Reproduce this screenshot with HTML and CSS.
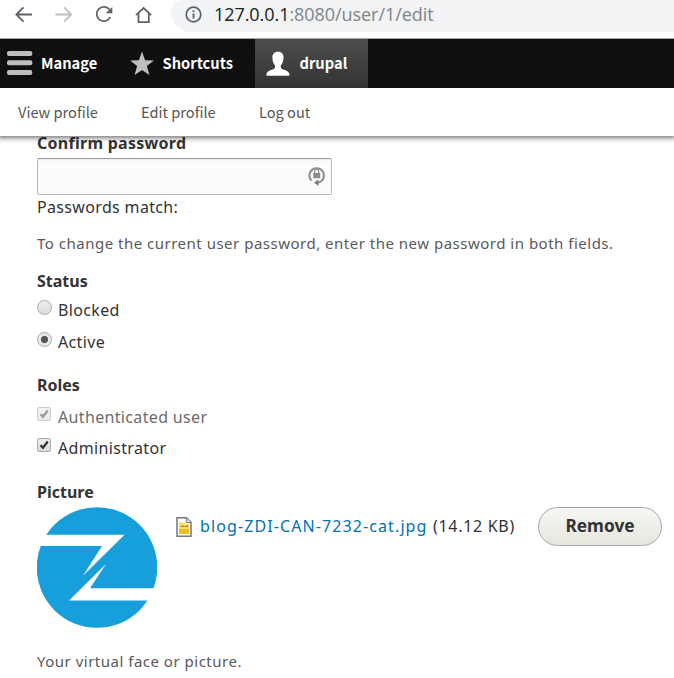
FILE: index.html
```html
<!DOCTYPE html>
<html lang="en">
<head>
<meta charset="utf-8">
<title>drupal</title>
<link rel="stylesheet" href="styles.css">
</head>
<body>
<header>
  <nav class="browser">
    <svg class="nav-icons" width="160" height="32" viewBox="0 0 160 32" fill="none" stroke="#5f6368" stroke-width="1.8">
      <path d="M32 14.5H17M23.5 7.3L16.3 14.5l7.2 7.2"/>
      <path stroke="#bdbfc1" d="M55.5 14.5H71M64 7.3l7.2 7.2-7.2 7.2"/>
      <path d="M109.500 9.500A7.200 7.200 0 1 0 110.300 17.200"/>
      <path d="M112.300 7v6.300h-6.800z" fill="#5f6368" stroke="none"/>
      <path d="M136 15.200L143.600 8l7.600 7.200M138.500 13.500v8.600h10.300v-8.600" />
    </svg>
    <div class="address">
      <svg width="17" height="17" viewBox="0 0 17 17" fill="none" stroke="#5f6368" stroke-width="1.7"><circle cx="8.500" cy="8.500" r="7.300"/><path stroke-width="1.900" d="M8.500 7.500v5M8.500 4.200v1.900"/></svg>
      <span class="url">127.0.0.1<span>:8080/user/1/edit</span></span>
    </div>
  </nav>
  <nav class="toolbar">
    <a class="tab manage"><svg width="26" height="26" viewBox="0 0 26 26" fill="#bebebe"><rect x="0" y="1" width="25.300" height="5" rx="2"/><rect x="0" y="10.300" width="25.300" height="5" rx="2"/><rect x="0" y="20" width="25.300" height="5" rx="2"/></svg><span>Manage</span></a>
    <a class="tab shortcuts"><svg width="24" height="25" viewBox="0 0 24 25" fill="#bebebe"><path d="M12 .5l3.100 8.700 8.800.2-7 5.500 2.500 9.200L12 18.900l-7.400 5.200 2.500-9.200-7-5.500 8.800-.2z"/></svg><span>Shortcuts</span></a>
    <a class="tab user"><svg width="24" height="25" viewBox="0 0 24 25" fill="#fff"><path d="M12 .8c3.800 0 5.700 2.400 5.500 6.400-.1 3-1.100 5.100-2.300 6.700-.8 1.200-.6 3.100.6 3.800 2.400 1.400 6.400 1.800 7.500 4.700.3.900.2 2.300-.5 2.300H1c-.7 0-.7-1.500-.4-2.300 1.100-2.900 5.100-3.300 7.500-4.700 1.200-.7 1.400-2.600.6-3.800-1.200-1.600-2.200-3.700-2.300-6.700C6.200 3.200 8.200.8 12 .8z"/></svg><span>drupal</span></a>
  </nav>
  <nav class="tray"><a class="view">View profile</a><a class="edit">Edit profile</a><a class="logout">Log out</a></nav>
</header>
<main>
  <h4 class="confirm"><span>Confirm password</span></h4>
  <div class="field">
    <svg width="18" height="22" viewBox="0 0 18 22" fill="none" stroke="#8b8b8b" stroke-width="2"><path d="M3.500 15.600A7.300 7.300 0 1 1 13.800 15.600Q11.500 18.100 8 18.100"/><path d="M6 17.800l4.500-3.300v6.600z" fill="#777" stroke="none"/><rect x="5.200" y="8" width="7" height="5.200" fill="#8b8b8b" stroke="none"/><path stroke-width="1.200" d="M6.700 8V6.500a2 2 0 0 1 4 0V8"/></svg>
  </div>
  <p class="match"><span>Passwords match:</span></p>
  <p class="help"><span>To change the current user password, enter the new password in both fields.</span></p>
  <h4 class="status"><span>Status</span></h4>
  <label class="option blocked"><i class="radio"></i><span>Blocked</span></label>
  <label class="option active"><i class="radio on"></i><span>Active</span></label>
  <h4 class="roles"><span>Roles</span></h4>
  <label class="option auth"><i class="check"><svg width="12" height="12" viewBox="0 0 12 12"><path d="M2.500 6.200l2.400 2.500L9.800 2.500" fill="none" stroke="#444" stroke-width="2.300"/></svg></i><span>Authenticated user</span></label>
  <label class="option admin"><i class="check"><svg width="12" height="12" viewBox="0 0 12 12"><path d="M2.500 6.200l2.400 2.500L9.800 2.500" fill="none" stroke="#333" stroke-width="2.300"/></svg></i><span>Administrator</span></label>
  <h4 class="picture"><span>Picture</span></h4>
  <div class="upload">
    <svg class="avatar" width="120" height="121" viewBox="0 0 120 121"><circle cx="60" cy="60.500" r="60.300" fill="#179fdc"/><path fill="#fff" d="M0 27.700H87.500L46 68.700 65 39H0zM120 93.500H32L69 57 53 81.300H120z"/></svg>
    <svg class="file-icon" width="16" height="20" viewBox="0 0 16 20"><path d="M1 .8h9.500L15 5.300v13.900H1z" fill="#fff" stroke="#777" stroke-width="1.500"/><path d="M10.300.8v4.700H15" fill="#ddd" stroke="#777"/><path d="M3 5.500h6v1.500h4v10H3z" fill="#fbdc65"/><path d="M3 12h10v5H3z" fill="#f0bd20"/><path d="M4 9.500l3-1 2 .8 3-1v1.500H4z" fill="#8c6b13"/></svg>
    <span class="filename">blog-ZDI-CAN-7232-cat.jpg</span>
    <span class="size">(14.12 KB)</span>
    <button><span>Remove</span></button>
  </div>
  <p class="note"><span>Your virtual face or picture.</span></p>
</main>
</body>
</html>
```

FILE: styles.css
```css
* { box-sizing: border-box; }
body { margin: 0; height: 678px; overflow: hidden; background: #fff; color: #333; font: 16px/24px "Noto Sans", sans-serif; }
header { position: relative; z-index: 1; box-shadow: 0 0 5px 2px rgba(0,0,0,.55); font-family: "Noto Sans CJK SC", sans-serif; }
svg { display: block; flex: none; }
.browser { display: flex; height: 39px; background: #fff; border-bottom: 1px solid #a5a7a8; }
.nav-icons { margin-right: 11px; }
.address { display: flex; flex: 1; align-items: center; height: 32px; padding: 0 0 3px 14px; background: #f1f3f4; border-radius: 12px 0 0 20px; }
.url { margin: -1px 0 0 12px; font: 18px/28px "Open Sans", sans-serif; letter-spacing: -.06px; color: #222; white-space: nowrap; }
.url span { color: #80868b; }
.toolbar { display: flex; height: 49px; background: #0f0f0f; color: #fff; font-size: 14.700px; font-weight: 700; }
.tab { display: flex; align-items: center; white-space: nowrap; padding-bottom: 1px; }
.manage { width: 123px; padding-left: 7px; gap: 8px; }
.shortcuts { width: 132px; padding-left: 6.500px; gap: 9px; }
.user { width: 113px; padding-left: 10.500px; gap: 10px; background: linear-gradient(#4d4d4d, #333); }
.tray { display: flex; height: 48px; align-items: center; background: #fff; color: #565656; font-size: 14.600px; padding: 0 0 0 18px; }
.view { width: 123px; }
.edit { width: 118px; }
main { padding: 0 12px 0 37px; margin-top: -5px; letter-spacing: .34px; }
h4, p { margin: 0; white-space: nowrap; }
h4 { font-size: 16px; font-weight: 700; line-height: 24px; letter-spacing: 0; }
.confirm { letter-spacing: .27px; }
.field { display: flex; justify-content: flex-end; width: 295px; height: 37px; margin-top: 3px; padding: 6px 5px 0 0; border: 1px solid #b8b8b8; border-top-color: #999; border-radius: 2px; background: #fcfcfa; box-shadow: inset 0 1px 2px rgba(0,0,0,.08); }
.match { height: 36px; }
.help, .note { color: #595959; font-size: 15px; letter-spacing: .5px; }
.help { height: 38px; }
.status { height: 29px; }
.option { display: flex; gap: 6px; white-space: nowrap; }
.blocked { height: 32px; }
.active { height: 43px; }
.roles { height: 32px; }
.auth { height: 31px; color: #6b6b6b; }
.admin { height: 44px; }
.radio, .check { flex: none; width: 15px; height: 15px; margin-top: 2px; border: 1px solid #a9a9a9; background: linear-gradient(#efefef, #dcdcdc); }
.radio { border-radius: 50%; }
.on { background: radial-gradient(circle at center, #555 0 3.200px, #e8e8e8 4px); }
.check { width: 14px; height: 14px; margin-right: 1px; border-radius: 2px; }
.auth .check { opacity: .55; }
.picture { height: 27px; }
.upload { display: flex; height: 142px; white-space: nowrap; }
.file-icon { margin: 10px 8px 0 19px; }
.filename { width: 233px; margin-top: 7px; color: #0071b3; letter-spacing: 1.100px; }
.size { width: 105px; margin-top: 7px; letter-spacing: .7px; }
button { width: 124px; height: 39px; padding: 0 0 3px; border: 1px solid #a6a6a6; border-radius: 20px; background: linear-gradient(#f6f6f3, #e7e7df); color: #333; font: 700 17.300px "Noto Sans", sans-serif; }
```
